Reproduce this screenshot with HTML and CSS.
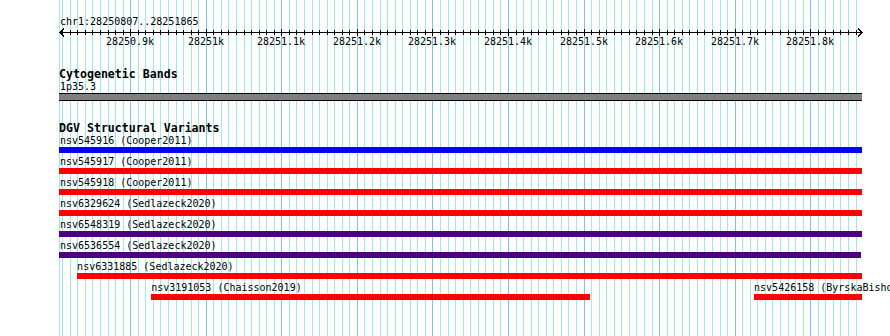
FILE: index.html
```html
<!DOCTYPE html>
<html lang="en">
<head>
    <meta charset="UTF-8">
    <meta name="viewport" content="width=device-width, initial-scale=1.0">
    <title>chr1:28250807..28251865</title>
    <link rel="stylesheet" href="styles.css">
</head>
<body>
<div class="browser">
    <div id="gridlines" class="gridlines">
        <div class="gridline edge"></div>
    </div>
    <div class="track ruler-track">
        <div class="location">chr1:28250807..28251865</div>
        <div id="ruler" class="ruler">
            <svg id="ruler-svg" class="ruler-svg" width="890" height="10"></svg>
        </div>
    </div>
    <div class="track band-track">
        <div class="track-title">Cytogenetic Bands</div>
        <div class="band-label">1p35.3</div>
        <div class="band"></div>
    </div>
    <div class="track dgv-track">
        <div class="track-title">DGV Structural Variants</div>
        <div id="features" class="features"></div>
    </div>
</div>
<script>
var START=28250807;
var END=28251865;
var PX_PER_BP=0.7555;
var ORIGIN=60.5;
var CLIP_LEFT=59;
var CLIP_RIGHT=862;

function bpToPx(bp){
    return ORIGIN+(bp-START)*PX_PER_BP;
}

// grid + ruler ticks, one every 10bp
let grid=document.getElementById("gridlines");
let svg=document.getElementById("ruler-svg");
let ruler=document.getElementById("ruler");
let ticks='<line x1="60" y1="4.5" x2="861" y2="4.5"/>'+
    '<polyline points="64,0.5 60,4.5 64,8.5" fill="none"/>'+
    '<polyline points="858,0.5 862,4.5 858,8.5" fill="none"/>';
for(let bp=28250810;bp<=28251860;bp+=10){
    let x=Math.floor(bpToPx(bp));
    let major=bp%100==0;
    let line=document.createElement("div");
    line.className=major?"gridline major":"gridline";
    line.style.left=x+"px";
    grid.appendChild(line);
    ticks+='<line x1="'+(x+0.5)+'" y1="'+(major?1:2)+'" x2="'+(x+0.5)+'" y2="'+(major?8:7)+'"/>';
    if(major){
        let label=document.createElement("div");
        label.className="tick-label";
        label.style.left=x+"px";
        label.textContent=(bp/1000).toFixed(1).replace(".0","")+"k";
        ruler.appendChild(label);
    }
}
svg.innerHTML=ticks;

// DGV features, one row each as laid out by the browser
let rows=[
    [{name:"nsv545916",study:"Cooper2011",start:28250700,end:28252000,type:"gain"}],
    [{name:"nsv545917",study:"Cooper2011",start:28250700,end:28252000,type:"loss"}],
    [{name:"nsv545918",study:"Cooper2011",start:28250700,end:28252000,type:"loss"}],
    [{name:"nsv6329624",study:"Sedlazeck2020",start:28250700,end:28252000,type:"loss"}],
    [{name:"nsv6548319",study:"Sedlazeck2020",start:28250700,end:28252000,type:"both"}],
    [{name:"nsv6536554",study:"Sedlazeck2020",start:28250700,end:28251867,type:"both"}],
    [{name:"nsv6331885",study:"Sedlazeck2020",start:28250829,end:28252000,type:"loss"}],
    [{name:"nsv3191053",study:"Chaisson2019",start:28250927,end:28251508,type:"loss"},
     {name:"nsv5426158",study:"ByrskaBishop2022",start:28251725,end:28252000,type:"loss"}]
];
let features=document.getElementById("features");
for(let i=0;i<rows.length;i++){
    let row=document.createElement("div");
    row.className="feature-row";
    for(let j=0;j<rows[i].length;j++){
        let f=rows[i][j];
        let left=Math.max(CLIP_LEFT,bpToPx(f.start));
        let right=Math.min(CLIP_RIGHT,bpToPx(f.end));
        row.innerHTML+=
            "<div class='feature-label' style='left:"+Math.max(60,left)+"px'>"+f.name+" ("+f.study+")</div>"+
            "<div class='feature "+f.type+"' style='left:"+left+"px;width:"+(right-left)+"px'></div>";
    }
    features.appendChild(row);
}
</script>
</body>
</html>
```

FILE: styles.css
```css
html,body{
    margin: 0;
    background: #fff;
}
body{
    overflow: hidden;
    font-family: "DejaVu Sans Mono", "Liberation Mono", monospace;
    font-size: 10px;
    color: #000;
}
.browser{
    position: relative;
    width: 890px;
    height: 336px;
    overflow: hidden;
}

/* grid */
.gridlines{
    position: absolute;
    top: 0;
    left: 0;
    width: 100%;
    height: 100%;
}
.gridline{
    position: absolute;
    top: 0;
    width: 1px;
    height: 100%;
    background-color: #a3e8ef;
}
.gridline.major{
    background-color: #7fc4e8;
}
.gridline.edge{
    left: 59px;
}

.track{
    position: relative;
}
.track-title{
    padding-left: 59px;
    font-size: 11.6px;
    font-weight: bold;
    line-height: 14px;
}

/* ruler */
.ruler-track{
    height: 67px;
}
.location{
    padding: 16px 0 0 60px;
    line-height: 12px;
}
.ruler{
    position: relative;
    height: 24px;
}
.ruler-svg{
    display: block;
    stroke: #000;
    stroke-width: 1;
    shape-rendering: crispEdges;
}
.tick-label{
    position: absolute;
    top: 8px;
    line-height: 12px;
    transform: translateX(-50%);
    white-space: nowrap;
}

/* cytobands */
.band-track{
    height: 54px;
}
.band-label{
    padding-left: 60px;
    line-height: 12px;
}
.band{
    margin: 0 0 0 59px;
    width: 803px;
    height: 6px;
    border-top: 1px solid #000;
    border-bottom: 1px solid #000;
    background-color: #808080;
}

/* DGV */
.feature-row{
    position: relative;
    height: 21px;
}
.feature-label{
    position: absolute;
    top: 0;
    line-height: 12px;
    white-space: nowrap;
}
.feature{
    position: absolute;
    top: 12px;
    height: 6px;
}
.feature.gain{
    background-color: #0000ff;
}
.feature.loss{
    background-color: #ff0000;
}
.feature.both{
    background-color: #4b0082;
}
```
